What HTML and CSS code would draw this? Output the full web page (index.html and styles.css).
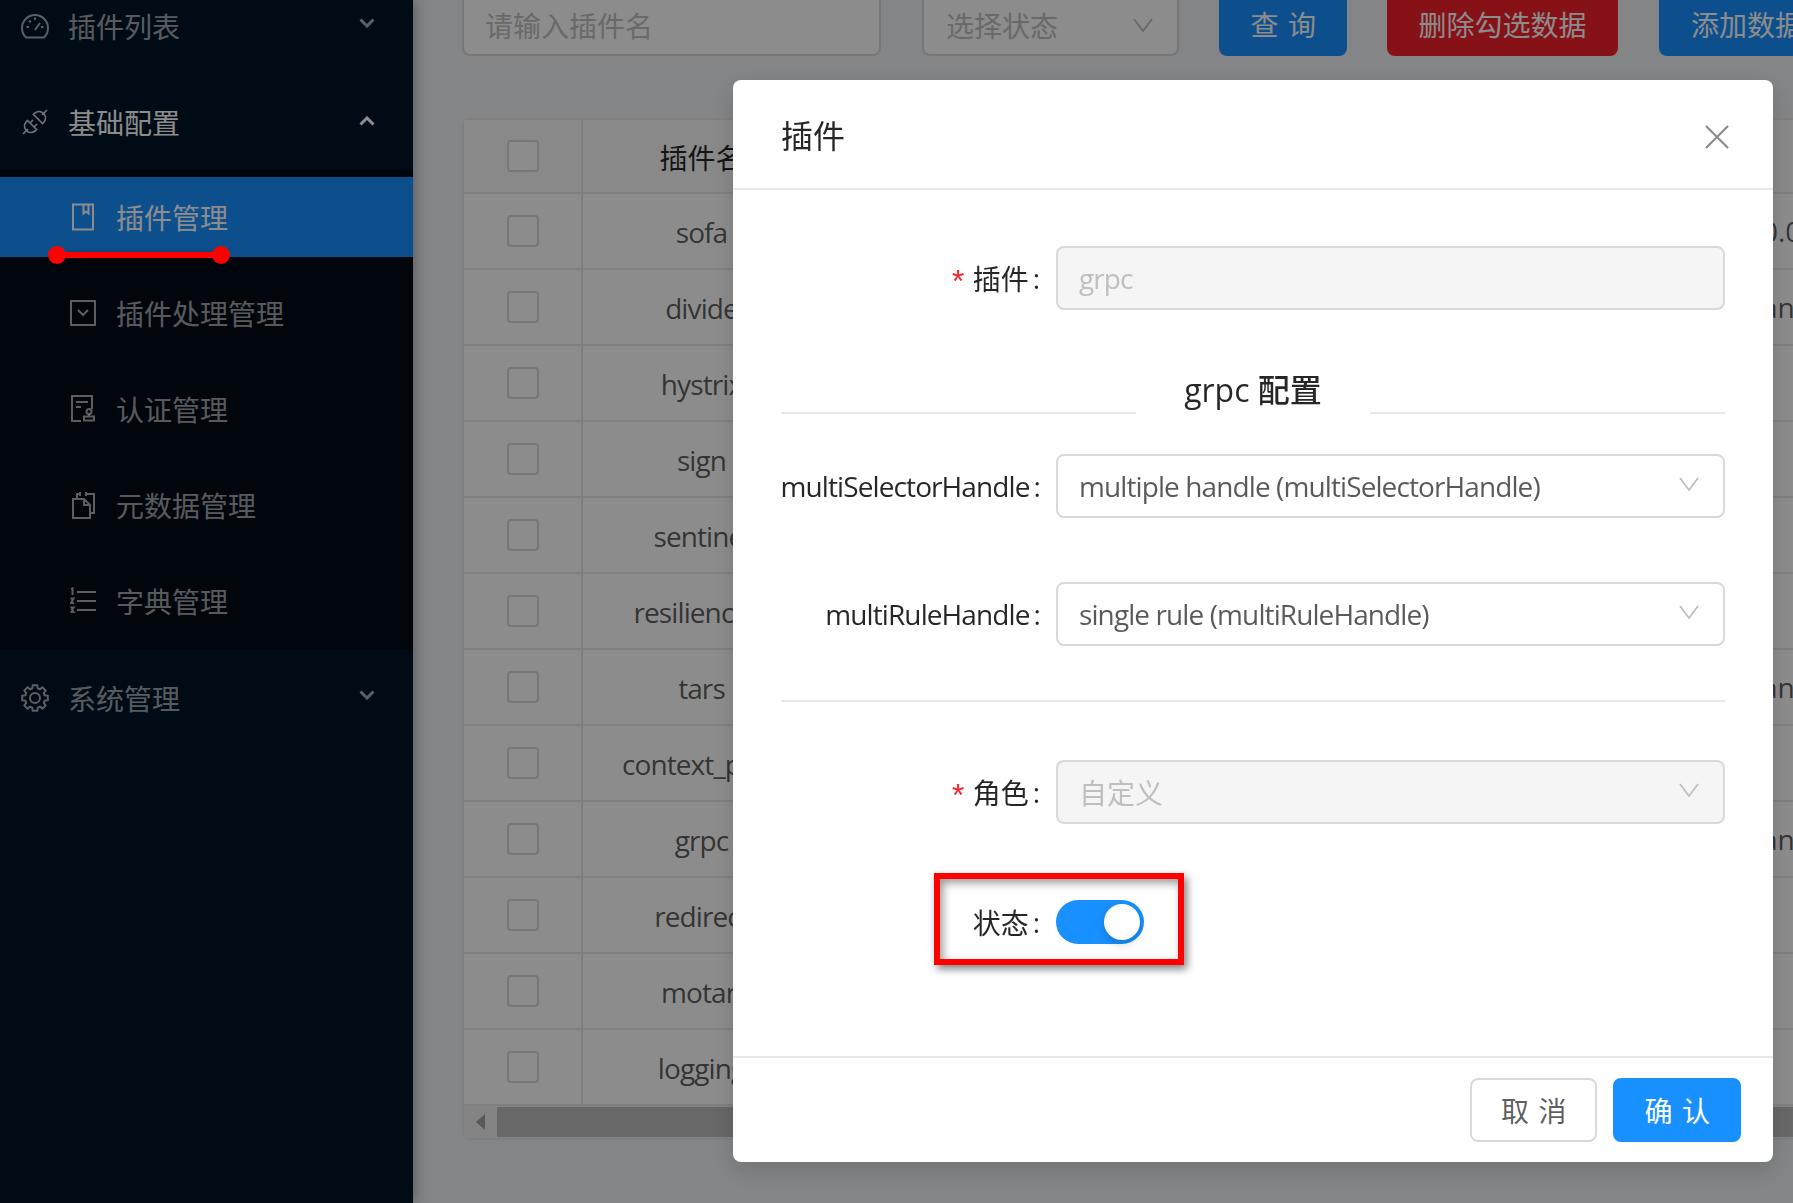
FILE: index.html
```html
<!DOCTYPE html>
<html lang="en">
<head>
    <meta charset="UTF-8">
    <meta name="viewport" content="width=device-width, initial-scale=1.0">
    <title>Plugin</title>
    <link rel="stylesheet" href="styles.css">
</head>
<body>

    <div class="layout">
        <aside class="sider">
            <ul class="menu">
                <li class="menu-title">
                    <svg class="icon" viewBox="0 0 28 28"><path d="M5 25.500A13 13 0 1 1 23 25.500Z"/><path d="M14 18l5-7M5.500 15H8M20 15h2.500M8 8.500l1.800 1.800M14 5.500V8"/></svg>
                    <span>插件列表</span>
                    <svg class="arrow" viewBox="0 0 16 10"><path d="M1.500 1.500L8 8l6.500-6.500"/></svg>
                </li>
                <li class="menu-title open">
                    <svg class="icon icon-plug" viewBox="0 0 28 28"><path d="M2 26l5-5M26 2l-5 5M6.500 12.500l9 9-1.500 1.500a6.400 6.400 0 0 1-9-9ZM21.500 15.500l-9-9 1.500-1.500a6.400 6.400 0 0 1 9 9ZM9 15l3-3M13 19l3-3"/></svg>
                    <span>基础配置</span>
                    <svg class="arrow arrow-up" viewBox="0 0 16 10"><path d="M1.500 8.500L8 2l6.500 6.500"/></svg>
                </li>
                <li>
                    <ul class="submenu">
                        <li class="sub-item active">
                            <svg class="icon-sm" viewBox="0 0 26 28"><path d="M3 1.500h20v25H3ZM13.500 1.500v9l2.500-2 2.500 2v-9"/></svg>
                            <span>插件管理</span>
                        </li>
                        <li class="sub-item">
                            <svg class="icon-sm" viewBox="0 0 26 28"><path d="M1 2h24v24H1ZM8 11l5 5 5-5"/></svg>
                            <span>插件处理管理</span>
                        </li>
                        <li class="sub-item">
                            <svg class="icon-sm" viewBox="0 0 26 28"><path d="M11 26H2V1h20v13M6 7h12M6 12h5M14 25.500h10v-4H14ZM19 21v-2"/><circle cx="19" cy="16.500" r="2.500"/></svg>
                            <span>认证管理</span>
                        </li>
                        <li class="sub-item">
                            <svg class="icon-sm" viewBox="0 0 26 28"><path d="M3 8h11l6 6v13H3ZM14 8v6h6M7 8V3h3M16 3h8v19h-4M10 1v4M16 1v4"/></svg>
                            <span>元数据管理</span>
                        </li>
                        <li class="sub-item">
                            <svg class="icon-sm" viewBox="0 0 26 28"><path d="M7 5h19M7 14h19M7 23h19M1 2l1.500-.5V8M.5 11.500h3L1 16h3M.5 20.500h3l-1.500 2 1.500 2.500H.5"/></svg>
                            <span>字典管理</span>
                        </li>
                    </ul>
                </li>
                <li class="menu-title">
                    <svg class="icon" viewBox="-14 -14 28 28"><polygon points="9.610,-2.760 12.800,-2.260 12.800,2.260 9.610,2.760 8.750,4.850 10.650,7.460 7.460,10.650 4.850,8.750 2.760,9.610 2.260,12.800 -2.260,12.800 -2.760,9.610 -4.850,8.750 -7.460,10.650 -10.650,7.460 -8.750,4.850 -9.610,2.760 -12.800,2.260 -12.800,-2.260 -9.610,-2.760 -8.750,-4.850 -10.650,-7.460 -7.460,-10.650 -4.850,-8.750 -2.760,-9.610 -2.260,-12.800 2.260,-12.800 2.760,-9.610 4.850,-8.750 7.460,-10.650 10.650,-7.460 8.750,-4.850"/><circle r="5"/></svg>
                    <span>系统管理</span>
                    <svg class="arrow" viewBox="0 0 16 10"><path d="M1.500 1.500L8 8l6.500-6.500"/></svg>
                </li>
            </ul>
        </aside>

        <main class="content">
            <div class="toolbar">
                <div class="search-input">请输入插件名</div>
                <div class="search-select">
                    <span>选择状态</span>
                    <svg class="select-arrow" viewBox="0 0 20 14"><path d="M1 1l9 12 9-12"/></svg>
                </div>
                <button class="btn btn-primary btn-query">查询</button>
                <button class="btn btn-danger">删除勾选数据</button>
                <button class="btn btn-primary btn-add">添加数据</button>
            </div>

            <div class="table">
                <div class="row head"><div class="cell"><i class="checkbox"></i></div><div class="cell">插件名</div><div></div><div class="cell-last"></div></div>
                <div class="row"><div class="cell"><i class="checkbox"></i></div><div class="cell en">sofa</div><div></div><div class="cell-last">0.0</div></div>
                <div class="row"><div class="cell"><i class="checkbox"></i></div><div class="cell en">divide</div><div></div><div class="cell-last">an</div></div>
                <div class="row"><div class="cell"><i class="checkbox"></i></div><div class="cell en">hystrix</div><div></div><div class="cell-last"></div></div>
                <div class="row"><div class="cell"><i class="checkbox"></i></div><div class="cell en">sign</div><div></div><div class="cell-last"></div></div>
                <div class="row"><div class="cell"><i class="checkbox"></i></div><div class="cell en">sentinel</div><div></div><div class="cell-last"></div></div>
                <div class="row"><div class="cell"><i class="checkbox"></i></div><div class="cell en">resilience4j</div><div></div><div class="cell-last"></div></div>
                <div class="row"><div class="cell"><i class="checkbox"></i></div><div class="cell en">tars</div><div></div><div class="cell-last">an</div></div>
                <div class="row"><div class="cell"><i class="checkbox"></i></div><div class="cell en">context_path</div><div></div><div class="cell-last"></div></div>
                <div class="row"><div class="cell"><i class="checkbox"></i></div><div class="cell en">grpc</div><div></div><div class="cell-last">an</div></div>
                <div class="row"><div class="cell"><i class="checkbox"></i></div><div class="cell en">redirect</div><div></div><div class="cell-last"></div></div>
                <div class="row"><div class="cell"><i class="checkbox"></i></div><div class="cell en">motan</div><div></div><div class="cell-last"></div></div>
                <div class="row"><div class="cell"><i class="checkbox"></i></div><div class="cell en">logging</div><div></div><div class="cell-last"></div></div>
                <div class="scrollbar">
                    <div class="scroll-btn"><i class="scroll-left"></i></div>
                    <div class="scroll-thumb"></div>
                </div>
            </div>
        </main>
    </div>

    <div class="mask"></div>

    <!-- annotation under the active menu item -->
    <div class="mark-line"><i></i><i></i></div>

    <div class="modal">
        <div class="modal-header">
            <span>插件</span>
            <svg class="modal-close" viewBox="0 0 24 24"><path d="M1 1l22 22M23 1L1 23"/></svg>
        </div>
        <div class="modal-body">
            <div class="form-row">
                <label class="form-label"><em>*</em>插件<b>:</b></label>
                <div class="field disabled en">grpc</div>
            </div>
            <div class="section-title">
                <span>grpc 配置</span>
            </div>
            <div class="form-row row-select">
                <label class="form-label en">multiSelectorHandle<b>:</b></label>
                <div class="field select">
                    <span class="en">multiple handle (multiSelectorHandle)</span>
                    <svg class="select-arrow" viewBox="0 0 20 14"><path d="M1 1l9 12 9-12"/></svg>
                </div>
            </div>
            <div class="form-row row-rule">
                <label class="form-label en">multiRuleHandle<b>:</b></label>
                <div class="field select">
                    <span class="en">single rule (multiRuleHandle)</span>
                    <svg class="select-arrow" viewBox="0 0 20 14"><path d="M1 1l9 12 9-12"/></svg>
                </div>
            </div>
            <div class="form-divider"></div>
            <div class="form-row">
                <label class="form-label"><em>*</em>角色<b>:</b></label>
                <div class="field select disabled">
                    <span>自定义</span>
                    <svg class="select-arrow" viewBox="0 0 20 14"><path d="M1 1l9 12 9-12"/></svg>
                </div>
            </div>
            <div class="form-row row-switch">
                <label class="form-label">状态<b>:</b></label>
                <div class="switch"><i></i></div>
            </div>
            <div class="mark-box"></div>
        </div>
        <div class="modal-footer">
            <button class="btn btn-default"><span>取消</span></button>
            <button class="btn btn-blue"><span>确认</span></button>
        </div>
    </div>

</body>
</html>
```

FILE: styles.css
```css
* {
    box-sizing: border-box;
}
html, body {
    margin: 0;
    height: 100%;
    overflow: hidden;
}
body {
    font-family: "Open Sans", "Noto Sans CJK SC", sans-serif;
    font-size: 28px;
    color: rgba(0, 0, 0, 0.65);
    background: #f0f2f5;
}
ul {
    list-style: none;
    margin: 0;
    padding: 0;
}
.en {
    letter-spacing: -0.9px;
}
.layout {
    display: flex;
    height: 1203px;
}

/* sidebar */
.sider {
    width: 413px;
    flex-shrink: 0;
    background: #001529;
    color: rgba(255, 255, 255, 0.65);
    box-shadow: 2px 0 12px rgba(0, 21, 41, 0.35);
    overflow: hidden;
}
.menu {
    margin-top: -14px;
}
.menu-title {
    display: flex;
    align-items: center;
    height: 80px;
    padding-left: 21px;
    margin-bottom: 16px;
}
.menu-title.open {
    color: #fff;
    margin-bottom: 7px;
}
.icon {
    width: 28px;
    height: 28px;
    margin-right: 19px;
    fill: none;
    stroke: currentColor;
    stroke-width: 2;
}
.icon-plug {
    stroke-width: 1.700;
    color: rgba(255, 255, 255, 0.8);
}
.arrow {
    width: 16px;
    height: 10px;
    margin-left: auto;
    margin-right: 38px;
    margin-top: -6px;
    fill: none;
    stroke: currentColor;
    stroke-width: 3;
}
.arrow-up {
    margin-top: -3px;
}
.submenu {
    background: #000c17;
    padding: 8px 0;
    margin-bottom: 9px;
}
.sub-item {
    display: flex;
    align-items: center;
    height: 80px;
    padding-left: 70px;
    margin-bottom: 16px;
}
.sub-item:last-child {
    margin-bottom: 0;
}
.sub-item.active {
    background: #1890ff;
    color: #fff;
}
.icon-sm {
    width: 26px;
    height: 28px;
    margin-right: 20px;
    fill: none;
    stroke: currentColor;
    stroke-width: 2;
}

/* search bar */
.content {
    flex: 1;
    min-width: 0;
    padding-left: 49px;
    overflow: hidden;
}
.toolbar {
    display: flex;
    height: 64px;
    margin-top: -8px;
    margin-right: -60px;
}
.search-input, .search-select {
    display: flex;
    align-items: center;
    height: 64px;
    padding-left: 22px;
    background: #fff;
    border: 2px solid #d9d9d9;
    border-radius: 8px;
    color: #bfbfbf;
}
.search-input {
    width: 419px;
    margin-right: 41px;
    padding-left: 21px;
    padding-top: 2px;
}
.search-select {
    width: 257px;
    justify-content: space-between;
    padding-right: 24px;
    padding-top: 2px;
    margin-right: 40px;
}
.btn {
    height: 64px;
    border: 2px solid transparent;
    border-radius: 8px;
    font-family: inherit;
    font-size: 28px;
    padding: 0 29px;
    flex-shrink: 0;
    white-space: nowrap;
}
.btn-primary {
    background: #1890ff;
    color: #fff;
}
.btn-query {
    width: 128px;
    letter-spacing: 0.34em;
    padding-right: 19px;
    margin-right: 40px;
}
.btn-danger {
    width: 231px;
    padding: 0;
    background: #f5222d;
    border-color: #f5222d;
    color: #fff;
    margin-right: 41px;
}
.btn-add {
    width: 176px;
}
.select-arrow {
    width: 20px;
    height: 14px;
    flex-shrink: 0;
    fill: none;
    stroke: #bfbfbf;
    stroke-width: 1.800;
}

/* table */
.table {
    width: 1400px;
    margin-top: 62px;
    border: 2px solid #e8e8e8;
    border-right: 0;
    border-radius: 8px 0 0 8px;
    background: #fff;
}
.row {
    display: grid;
    grid-template-columns: 119px 239px 940px 100px;
    height: 76px;
    border-bottom: 2px solid #e8e8e8;
    align-items: center;
}
.row.head {
    height: 74px;
    background: #fafafa;
    color: rgba(0, 0, 0, 0.85);
}
.cell {
    display: flex;
    align-items: center;
    justify-content: center;
    height: 100%;
    border-right: 2px solid #e8e8e8;
    white-space: nowrap;
    padding-top: 2px;
}
.cell-last {
    white-space: nowrap;
}
.checkbox {
    width: 32px;
    height: 32px;
    margin-top: -2px;
    border: 2px solid #d9d9d9;
    border-radius: 4px;
    background: #fff;
}
.scrollbar {
    display: flex;
    height: 32px;
    background: #f1f1f1;
}
.scroll-btn {
    display: flex;
    align-items: center;
    justify-content: center;
    width: 33px;
}
.scroll-left {
    border: 7px solid transparent;
    border-left: 0;
    border-right: 9px solid #a3a3a3;
    border-top-width: 8px;
    border-bottom-width: 8px;
}
.scroll-thumb {
    flex: 1;
    margin-top: 1px;
    margin-bottom: 1px;
    background: #bdbdbd;
}

/* modal */
.mask {
    position: fixed;
    inset: 0;
    background: rgba(0, 0, 0, 0.45);
}
.modal {
    position: fixed;
    left: 733px;
    top: 80px;
    width: 1040px;
    height: 1082px;
    display: flex;
    flex-direction: column;
    background: #fff;
    border-radius: 8px;
    box-shadow: 0 8px 24px rgba(0, 0, 0, 0.15);
}
.modal-header {
    display: flex;
    align-items: center;
    justify-content: space-between;
    height: 110px;
    padding: 0 44px 0 48px;
    border-bottom: 2px solid #e8e8e8;
    font-size: 32px;
    color: rgba(0, 0, 0, 0.85);
}
.modal-close {
    width: 24px;
    height: 24px;
    margin-top: 6px;
    fill: none;
    stroke: #8c8c8c;
    stroke-width: 2.200;
}
.modal-body {
    position: relative;
    flex: 1;
    padding: 56px 48px 0;
}
.form-row {
    display: flex;
    align-items: center;
    height: 64px;
}
.form-label {
    width: 275px;
    flex-shrink: 0;
    display: flex;
    justify-content: flex-end;
    align-items: center;
    color: rgba(0, 0, 0, 0.85);
    white-space: nowrap;
}
.form-label b {
    font-weight: 400;
    margin: 0 16px 0 4px;
}
.form-label em {
    font-family: "Liberation Mono", monospace;
    font-size: 32px;
    font-style: normal;
    color: #f5222d;
    margin-right: 5px;
    transform: translateY(6px);
}
.field {
    flex: 1;
    display: flex;
    align-items: center;
    justify-content: space-between;
    height: 64px;
    padding: 0 24px 0 21px;
    border: 2px solid #d9d9d9;
    border-radius: 8px;
    background: #fff;
}
.field.disabled {
    background: #f5f5f5;
    color: #bfbfbf;
}
.field .select-arrow {
    margin-top: -4px;
}
.section-title {
    display: flex;
    align-items: center;
    justify-content: center;
    gap: 48px;
    height: 54px;
    margin-top: 50px;
    margin-bottom: 40px;
    padding-top: 2px;
    font-size: 32px;
    font-weight: 500;
    color: rgba(0, 0, 0, 0.85);
}
.section-title::before, .section-title::after {
    content: "";
    flex: 1;
    align-self: flex-end;
    border-top: 2px solid #e8e8e8;
}
.row-rule {
    margin-top: 64px;
}
.form-divider {
    height: 2px;
    background: #e8e8e8;
    margin: 54px 0 58px;
}
.row-switch {
    height: 44px;
    margin-top: 76px;
}
.switch {
    position: relative;
    width: 88px;
    height: 44px;
    border-radius: 22px;
    background: #1890ff;
}
.switch i {
    position: absolute;
    top: 4px;
    right: 4px;
    width: 36px;
    height: 36px;
    border-radius: 50%;
    background: #fff;
    box-shadow: 0 4px 8px rgba(0, 35, 11, 0.2);
}
.modal-footer {
    display: flex;
    justify-content: flex-end;
    gap: 16px;
    height: 106px;
    padding: 20px 32px;
    border-top: 2px solid #e8e8e8;
}
.btn span {
    letter-spacing: 0.34em;
    margin-right: -0.34em;
}
.btn-default {
    background: #fff;
    border-color: #d9d9d9;
    color: rgba(0, 0, 0, 0.65);
}
.btn-blue {
    background: #1890ff;
    border-color: #1890ff;
    color: #fff;
}

/* red annotations */
.mark-box {
    position: absolute;
    left: 201px;
    top: 683px;
    width: 250px;
    height: 92px;
    border: 6px solid #ff0000;
    box-shadow: 3px 4px 8px rgba(0, 0, 0, 0.5), inset 3px 4px 8px rgba(0, 0, 0, 0.4);
}
.mark-line {
    position: fixed;
    left: 57px;
    top: 252px;
    width: 164px;
    height: 6px;
    background: #ff0000;
    box-shadow: 2px 3px 8px rgba(0, 0, 0, 0.4);
}
.mark-line i {
    position: absolute;
    top: -6px;
    left: -9px;
    width: 18px;
    height: 18px;
    border-radius: 50%;
    background: #ff0000;
}
.mark-line i:last-child {
    left: auto;
    right: -9px;
}
```
